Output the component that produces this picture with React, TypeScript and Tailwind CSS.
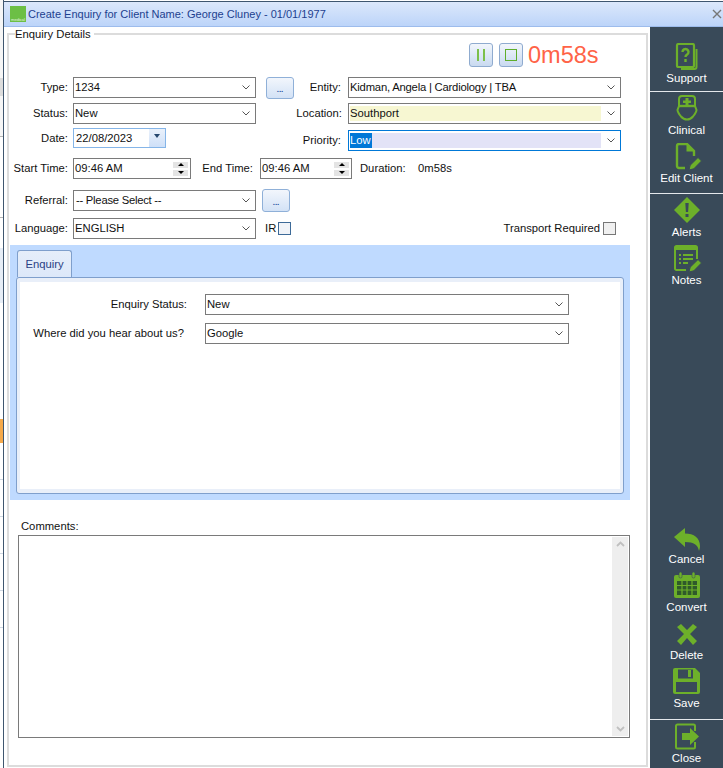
import React from 'react';

const green = '#6db02a';
const slate = '#394a59';

const Chevron = () => (
  <svg width="8" height="5" viewBox="0 0 8 5" className="shrink-0">
    <path d="M.5.5L4 4 7.500.5" fill="none" stroke="#555" strokeWidth="1" />
  </svg>
);

const Select = ({ value, className = '', inner = '' }: { value: React.ReactNode; className?: string; inner?: string }) => (
  <div className={`flex h-[21px] items-center border border-[#7a7a7a] bg-white pr-[5px] ${className}`}>
    <div className={`ml-px mr-[6px] flex h-[15px] flex-1 items-center overflow-hidden whitespace-nowrap ${inner}`}>{value}</div>
    <Chevron />
  </div>
);

const Label = ({ children, className = 'w-[58px] mr-[5px]' }: { children: React.ReactNode; className?: string }) => (
  <div className={`shrink-0 whitespace-nowrap text-right leading-[21px] ${className}`}>{children}</div>
);

const DotsButton = ({ className = '' }: { className?: string }) => (
  <div className={`flex w-[28px] items-end justify-center rounded-[3px] border border-[#8fb0d8] bg-gradient-to-b from-[#f2f6fc] to-[#d3e2f6] pb-[5px] text-[8px] font-bold leading-[6px] text-[#1f4fa0] ${className}`}>
    ...
  </div>
);

const Spinner = () => (
  <div className="mr-[2px] flex w-[15px] flex-col gap-[2px]">
    <div className="flex h-[6px] items-center justify-center bg-[#e4e4e4]">
      <div className="h-0 w-0 border-x-[3px] border-b-[3px] border-x-transparent border-b-black" />
    </div>
    <div className="flex h-[6px] items-center justify-center bg-[#e4e4e4]">
      <div className="h-0 w-0 border-x-[3px] border-t-[3px] border-x-transparent border-t-black" />
    </div>
  </div>
);

const TimeInput = ({ className }: { className: string }) => (
  <div className={`flex h-[21px] items-center justify-between border border-[#7a7a7a] pl-px ${className}`}>
    <span>09:46 AM</span>
    <Spinner />
  </div>
);

const Pencil = () => <path d="M17 27l1.200-4.800L26 14.500l3.500 3.500-7.700 7.800z" fill={green} stroke={slate} strokeWidth="1" />;

const icons: Record<string, React.ReactNode> = {
  support: (
    <>
      <path d="M9 26h13.500a2 2 0 0 0 2-2V6" fill="none" stroke={green} strokeWidth="2" />
      <rect x="5" y="1" width="17" height="23" rx="1.500" fill={slate} stroke={green} strokeWidth="2.200" />
      <path d="M10.500 9a3 3 0 1 1 4.600 2.500c-1 .7-1.600 1.200-1.600 2.500M13.500 16v3" fill="none" stroke={green} strokeWidth="2.400" />
    </>
  ),
  clinical: (
    <>
      <path d="M7 11V4a3 3 0 0 1 3-3h10a3 3 0 0 1 3 3v7z" fill="none" stroke={green} strokeWidth="2" />
      <path d="M13.500 3h3v2.500H19v2.500h-2.500v2h-3V8H11V5.500h2.500z" fill={green} />
      <path d="M7 11L5.500 15c0 2 1.500 4 3.500 6.500 2 2.300 4 3 6 3s4-.7 6-3c2-2.500 3.500-4.500 3.500-6.500L23 11" fill="none" stroke={green} strokeWidth="2" />
      <path d="M7 11h16" stroke={green} strokeWidth="2.400" />
    </>
  ),
  edit: (
    <>
      <path d="M13 25H7a2 2 0 0 1-2-2V3a2 2 0 0 1 2-2h8l7 7v5" fill="none" stroke={green} strokeWidth="2.400" />
      <path d="M14.500 1v7.500H22z" fill={green} />
      <Pencil />
    </>
  ),
  alerts: (
    <>
      <path d="M15 0l13 13-13 13L2 13z" fill={green} />
      <path d="M13.300 6h3.400l-.6 9h-2.200zM13.500 17h3v3h-3z" fill={slate} />
    </>
  ),
  notes: (
    <>
      <path d="M14 25H4.500A1.500 1.500 0 0 1 3 23.500v-21A1.500 1.500 0 0 1 4.500 1h19A1.500 1.500 0 0 1 25 2.500V14" fill="none" stroke={green} strokeWidth="2" />
      <path d="M3 2h22v3H3z" fill={green} />
      <path d="M7 9h2v2H7zM11 9h10v2H11zM7 13h2v2H7zM11 13h10v2H11zM7 17h2v2H7zM11 17h5v2h-5z" fill={green} />
      <Pencil />
    </>
  ),
  cancel: <path d="M2 13L13 4v5.500C22 9.500 28 14 28 22c0 1.500-.3 3-1 5-1-6-5-9-14-9v5z" fill={green} />,
  convert: (
    <>
      <rect x="2" y="3" width="26" height="23" rx="2" fill={green} />
      <rect x="7" y="0" width="3" height="6" rx="1.500" fill={green} stroke={slate} strokeWidth=".6" />
      <rect x="20" y="0" width="3" height="6" rx="1.500" fill={green} stroke={slate} strokeWidth=".6" />
      <rect x="5" y="9" width="20" height="14" fill="#2f5a2a" />
      <path d="M5 13.500h20M5 18h20M10 9v14M15 9v14M20 9v14" stroke={green} strokeWidth="1.200" />
    </>
  ),
  remove: <path d="M9 4l6 6 6-6 4 3-7 7 7 7-4 4-6-7-6 7-4-4 7-7-7-7z" fill={green} />,
  save: (
    <>
      <path d="M3 0h20l5 5v19a2 2 0 0 1-2 2H3a2 2 0 0 1-2-2V2a2 2 0 0 1 2-2z" fill={green} />
      <rect x="6" y="1.500" width="15" height="9" fill={slate} />
      <rect x="16" y="2" width="3" height="7" fill={green} />
      <rect x="4" y="14" width="21" height="10" fill={slate} />
    </>
  ),
  close: (
    <>
      <path d="M23 8V3a1.500 1.500 0 0 0-1.500-1.500h-16A1.500 1.500 0 0 0 4 3v21a1.500 1.500 0 0 0 1.500 1.500h16A1.500 1.500 0 0 0 23 24v-5" fill="none" stroke={green} strokeWidth="2" />
      <path d="M10 10h8V5l9 8.500-9 8.500v-5h-8z" fill={green} />
    </>
  ),
};

const SideItem = ({ icon, label }: { icon: string; label: string }) => (
  <div className="flex h-[44px] flex-col items-center">
    <svg width="30" height="27" viewBox="0 0 30 27" className="mt-[1px] shrink-0">
      {icons[icon]}
    </svg>
    <div className="h-[16px] text-[11.5px] leading-[16px] text-white">{label}</div>
  </div>
);

const Divider = ({ className = '' }: { className?: string }) => <div className={`h-px bg-[#e4e8ec] ${className}`} />;

// slices of the list window that sits behind the dialog
const behind = [
  { h: 'h-[78px]', bg: 'bg-[#f6f6f6]' },
  { h: 'h-[18px]', bg: 'bg-[#dcdcdc]' },
  { h: 'h-[40px]', bg: 'bg-[#f6f6f6]' },
  { h: 'h-px', bg: 'bg-[#b5b5b5]' },
  { h: 'h-[80px]', bg: 'bg-white' },
  { h: 'h-px', bg: 'bg-[#b5b5b5]' },
  { h: 'h-[30px]', bg: 'bg-white' },
  { h: 'h-[55px]', bg: 'bg-[#e6edf6]' },
  { h: 'h-[116px]', bg: 'bg-white' },
  { h: 'h-[24px]', bg: 'bg-[#f5a94a]' },
  { h: 'h-[36px]', bg: 'bg-white' },
  { h: 'h-px', bg: 'bg-[#cfd8e3]' },
  { h: 'h-[36px]', bg: 'bg-white' },
  { h: 'h-px', bg: 'bg-[#cfd8e3]' },
  { h: 'h-[36px]', bg: 'bg-white' },
  { h: 'h-px', bg: 'bg-[#cfd8e3]' },
  { h: 'h-[36px]', bg: 'bg-white' },
  { h: 'h-px', bg: 'bg-[#cfd8e3]' },
  { h: 'h-[36px]', bg: 'bg-white' },
  { h: 'h-px', bg: 'bg-[#cfd8e3]' },
];

export default function App() {
  return (
    <div className="flex h-[768px] w-[723px] overflow-hidden bg-white font-['Liberation_Sans',sans-serif] text-[11.25px] text-[#111]">
      <div className="flex w-[3px] shrink-0 flex-col bg-white">
        {behind.map((s, i) => (
          <div key={i} className={`${s.h} ${s.bg}`} />
        ))}
      </div>
      <div className="flex min-w-0 flex-1 flex-col border-l border-[#3f566f]">
        <div className="h-px bg-white" />
        <div className="h-px bg-[#3f566f]" />
        {/* title bar */}
        <div className="flex h-[25px] items-center border-b border-[#9dbcec] bg-gradient-to-b from-[#dce8fb] to-[#bcd4f9] pl-[6px] pr-[1px]">
          <div className="flex h-[16px] w-[16px] items-end justify-center bg-[#6cbf45] text-[4px] leading-[5px] text-white/80">medical</div>
          <div className="ml-[2px] flex-1 text-[11px] text-[#1d3f8f]">Create Enquiry for Client Name: George Cluney - 01/01/1977</div>
          <svg width="10" height="10" viewBox="0 0 10 10"><path d="M1 1l8 8M9 1l-8 8" stroke="#777" strokeWidth="1.400" /></svg>
        </div>
        <div className="flex min-h-0 flex-1">
          <div className="min-w-0 flex-1 pl-[3px] pr-[2px]">
            <fieldset className="h-[740px] border-2 border-[#dcdcdc] pl-px">
              <legend className="ml-[5px] h-[14px] pr-[3px] leading-[14px]">Enquiry Details</legend>
              {/* timer */}
              <div className="mt-[2px] flex h-[24px] items-center pl-[459px]">
                <div className="flex h-[24px] w-[24px] items-center justify-center gap-[4px] rounded-[3px] border border-[#8fabcf] bg-gradient-to-b from-[#f2f6fc] to-[#c9daf0]">
                  <div className="h-[12px] w-[2px] bg-[#7cc04a]" />
                  <div className="h-[12px] w-[2px] bg-[#7cc04a]" />
                </div>
                <div className="ml-[6px] flex h-[24px] w-[24px] items-center justify-center rounded-[3px] border border-[#8fabcf] bg-gradient-to-b from-[#f2f6fc] to-[#c9daf0]">
                  <div className="h-[12px] w-[12px] border border-[#5fae2c]" />
                </div>
                <div className="ml-[5px] text-[23.5px] leading-[24px] text-[#ff6347]">0m58s</div>
              </div>
              {/* type / entity */}
              <div className="mt-[10px] flex">
                <Label>Type:</Label>
                <Select className="w-[183px]" value="1234" />
                <DotsButton className="ml-[10px] h-[22px]" />
                <Label className="mr-[7px] w-[47px]">Entity:</Label>
                <Select className="w-[273px]" value={<span className="tracking-[-0.2px]">Kidman, Angela | Cardiology | TBA</span>} />
              </div>
              {/* status / location */}
              <div className="mt-[4px] flex">
                <Label>Status:</Label>
                <Select className="w-[183px]" value="New" />
                <Label className="mr-[6px] w-[86px]">Location:</Label>
                <Select className="w-[273px]" inner="bg-[#f7f7d2]" value="Southport" />
              </div>
              {/* date / priority */}
              <div className="mt-[4px] flex">
                <Label className="mr-[5px] w-[58px] leading-[20px]">Date:</Label>
                <div className="flex h-[20px] w-[93px] items-center border border-[#85b5e8] pl-[2px]">
                  <span className="flex-1">22/08/2023</span>
                  <div className="flex h-[18px] w-[16px] items-start justify-center bg-gradient-to-b from-[#eaf1fb] to-[#cfe0f8] pt-[5px]">
                    <div className="h-0 w-0 border-x-[3px] border-t-[4px] border-x-transparent border-t-[#26476e]" />
                  </div>
                </div>
                <Label className="mr-[7px] mt-[2px] w-[175px]">Priority:</Label>
                <div className="mt-[2px]">
                  <Select
                    className="w-[273px] border-[#0078d7]"
                    inner="bg-[#e3e3f7]"
                    value={<span className="bg-[#0078d7] pr-px text-white">Low</span>}
                  />
                </div>
              </div>
              {/* times */}
              <div className="mt-[7px] flex">
                <Label>Start Time:</Label>
                <TimeInput className="w-[118px]" />
                <Label className="mr-[7px] w-[62px]">End Time:</Label>
                <TimeInput className="w-[92px]" />
                <div className="ml-[8px] w-[58px] leading-[21px]">Duration:</div>
                <div className="leading-[21px]">0m58s</div>
              </div>
              {/* referral */}
              <div className="mt-[10px] flex items-center">
                <Label>Referral:</Label>
                <Select className="w-[183px]" value={<span className="ml-px tracking-[-0.25px]">-- Please Select --</span>} />
                <DotsButton className="ml-[6px] h-[23px]" />
              </div>
              {/* language */}
              <div className="mt-[6px] flex items-center">
                <Label>Language:</Label>
                <Select className="w-[183px]" value="ENGLISH" />
                <div className="ml-[9px]">IR</div>
                <div className="ml-[2px] h-[13px] w-[13px] border border-[#3d6a98] bg-[#f0f3f8]" />
                <div className="ml-auto">Transport Required</div>
                <div className="ml-[3px] mr-[30px] h-[13px] w-[13px] border border-[#777] bg-[#f0f0f0]" />
              </div>
              {/* enquiry tab panel */}
              <div className="mt-[6px] h-[255px] w-[620px] bg-[#bfdaff] px-[6px] pt-[5px]">
                <div className="ml-px flex h-[27px] w-[55px] items-center justify-center rounded-t-[3px] border border-b-0 border-[#7f9fcc] bg-gradient-to-b from-[#e6eefa] to-[#dde8f9] text-[#2b3f84]">Enquiry</div>
                <div className="h-[217px] rounded-[3px] border border-[#7f9fcc] bg-[#e9eff9] p-[4px] px-[3px]">
                  <div className="h-full bg-white pt-[12px]">
                    <div className="flex">
                      <div className="w-[167px] whitespace-nowrap text-right leading-[21px]">Enquiry Status:</div>
                      <Select className="ml-[18px] w-[364px]" value="New" />
                    </div>
                    <div className="mt-[8px] flex">
                      <div className="w-[164px] whitespace-nowrap text-right leading-[21px]">Where did you hear about us?</div>
                      <Select className="ml-[21px] w-[364px]" value="Google" />
                    </div>
                  </div>
                </div>
              </div>
              {/* comments */}
              <div className="ml-[11px] mt-[18px] h-[17px] leading-[16px]">Comments:</div>
              <div className="ml-[8px] flex h-[203px] w-[612px] justify-end border border-[#7a7a7a] py-px pr-px">
                <div className="flex w-[16px] flex-col items-center justify-between bg-[#eeeeee] py-[4px]">
                  <svg width="9" height="6" viewBox="0 0 9 6"><path d="M1 5l3.500-3.500L8 5" fill="none" stroke="#c0c0c0" strokeWidth="1.800" /></svg>
                  <svg width="9" height="6" viewBox="0 0 9 6"><path d="M1 1l3.500 3.500L8 1" fill="none" stroke="#c0c0c0" strokeWidth="1.800" /></svg>
                </div>
              </div>
            </fieldset>
          </div>
          {/* action sidebar */}
          <div className="flex w-[73px] shrink-0 flex-col bg-[#394a59] pt-[15px]">
            <SideItem icon="support" label="Support" />
            <Divider className="mb-[2px] mt-[5px]" />
            <div className="flex flex-col gap-[4px]">
              <SideItem icon="clinical" label="Clinical" />
              <SideItem icon="edit" label="Edit Client" />
            </div>
            <Divider className="mb-[2px] mt-[7px]" />
            <div className="flex flex-col gap-[4px]">
              <SideItem icon="alerts" label="Alerts" />
              <SideItem icon="notes" label="Notes" />
            </div>
            <div className="mt-auto flex flex-col gap-[4px]">
              <SideItem icon="cancel" label="Cancel" />
              <SideItem icon="convert" label="Convert" />
              <SideItem icon="remove" label="Delete" />
              <SideItem icon="save" label="Save" />
            </div>
            <Divider className="mb-[2px] mt-[8px]" />
            <div className="pb-[2px]">
              <SideItem icon="close" label="Close" />
            </div>
          </div>
        </div>
      </div>
    </div>
  );
}
